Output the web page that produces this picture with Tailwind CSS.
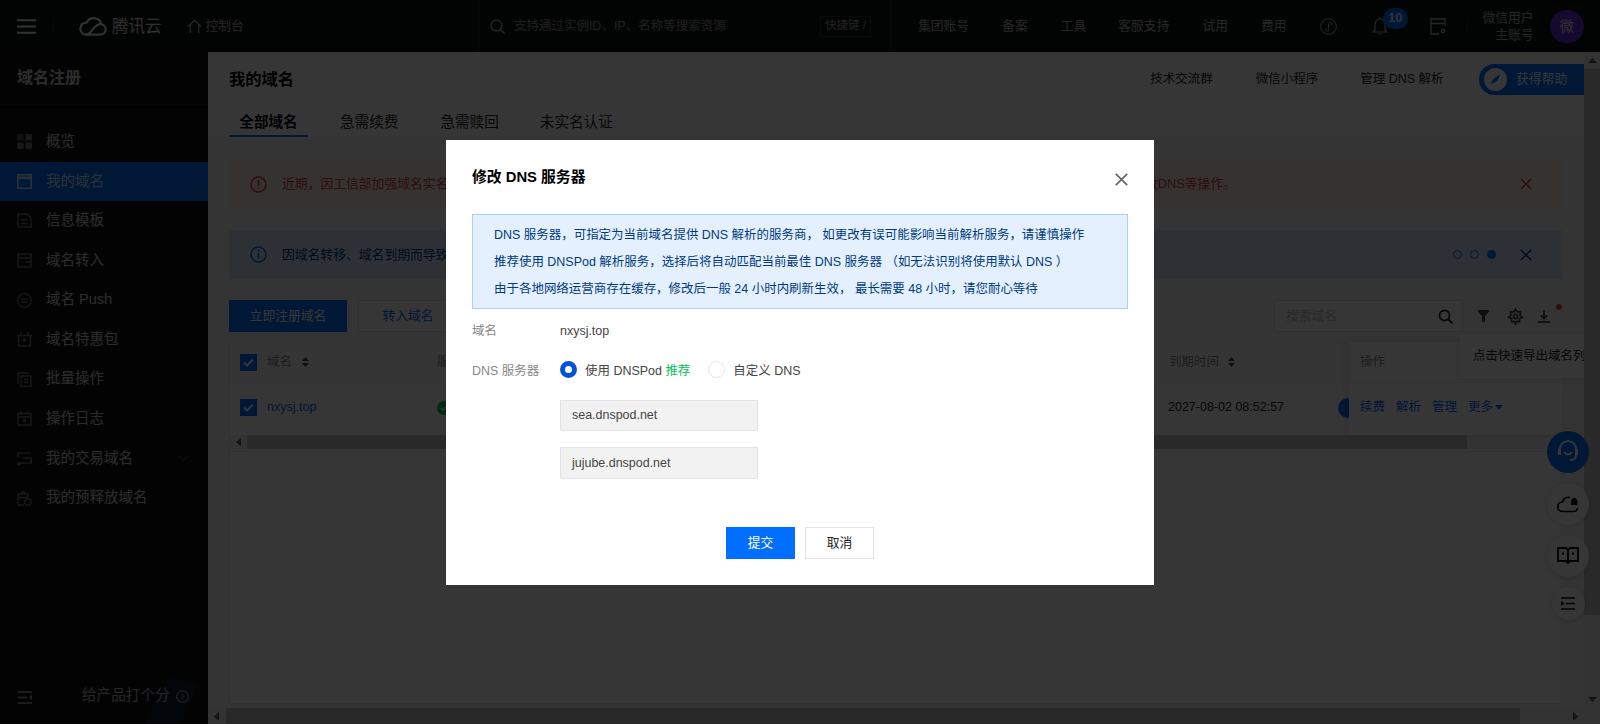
<!DOCTYPE html>
<html lang="zh">
<head>
<meta charset="utf-8">
<script src="https://cdn.jsdelivr.net/npm/@tailwindcss/browser@4"></script>
</head>
<body class="m-0 overflow-hidden bg-white">
<div class="relative w-[1600px] h-[724px] overflow-hidden font-['Liberation_Sans','Noto_Sans_CJK_SC',sans-serif] text-[12.5px] text-[#222]">

  <!-- top bar -->
  <header class="flex items-center h-[52px] bg-[#0d0e11] text-white/70 text-[12.8px]">
    <div class="flex items-center h-full w-[53px] pl-[17px] text-white/90">
      <svg width="20" height="15" viewBox="0 0 20 15"><path d="M0 1.2h19M0 7.5h19M0 13.8h19" stroke="currentColor" stroke-width="2"/></svg>
    </div>
    <div class="h-[16px] border-l border-white/10"></div>
    <svg width="28" height="20" viewBox="0 0 28 20" fill="none" stroke="currentColor" stroke-width="2.2" class="ml-[25px] text-white/90"><path d="M7 18.600h14.500a5.200 5.200 0 0 0 1-10.300A8 8 0 0 0 7.600 6.600 6 6 0 0 0 7 18.600Z"/><path d="M7 18.600c3.500 0 5-3 7-5.500s4-4.800 7.500-5.200"/></svg>
    <span class="ml-[5px] text-[16.500px] text-white/85">腾讯云</span>
    <svg width="15" height="15" viewBox="0 0 16 16" fill="none" stroke="currentColor" stroke-width="1.300" class="ml-[25px]"><path d="M1 8 8 1.500 15 8M3.500 6.500V15M12.500 6.500V15"/></svg>
    <span class="ml-[4px]">控制台</span>
    <div class="ml-[234px] h-full border-l border-white/10"></div>
    <svg width="15" height="15" viewBox="0 0 15 15" fill="none" stroke="currentColor" stroke-width="1.300" class="ml-[11px]"><circle cx="6.500" cy="6.500" r="5.500"/><path d="m10.500 10.500 4 4"/></svg>
    <span class="ml-[9px] w-[306px] text-[12.500px] text-white/55">支持通过实例ID、IP、名称等搜索资源</span>
    <span class="w-[51px] h-[21px] border border-white/15 flex items-center justify-center text-[11.500px] text-white/60">快捷键 /</span>
    <div class="ml-[19px] h-full border-l border-white/10"></div>
    <span class="ml-[27px]">集团账号</span>
    <span class="ml-[33px]">备案</span>
    <span class="ml-[33px]">工具</span>
    <span class="ml-[32px]">客服支持</span>
    <span class="ml-[33px]">试用</span>
    <span class="ml-[33px]">费用</span>
    <svg width="17" height="17" viewBox="0 0 17 17" fill="none" stroke="currentColor" stroke-width="1" class="ml-[33px]"><circle cx="8.500" cy="8.500" r="7.800"/><path d="M6 10.500a1.600 1.600 0 1 0 2.500 0V6.500a1.600 1.600 0 1 1 2.500 1"/></svg>
    <div class="relative ml-[35px] w-[16px] h-[20px]">
      <svg width="16" height="20" viewBox="0 0 16 20" fill="none" stroke="currentColor" stroke-width="1.200"><path d="M8 1v2M3 14V8a5 5 0 0 1 10 0v6l2 2H1ZM6 18h4"/></svg>
      <span class="absolute left-[11px] top-[-8px] w-[25px] h-[21px] rounded-full bg-[#006eff] flex items-center justify-center text-[12.500px] font-bold text-white/90">10</span>
    </div>
    <svg width="16" height="17" viewBox="0 0 16 17" fill="none" stroke="currentColor" stroke-width="1.300" class="ml-[42px]"><path d="M15 8V1H1v15h8M1 5.500h14"/><circle cx="13" cy="13" r="1.600"/></svg>
    <div class="ml-[21px] h-[16px] border-l border-white/10"></div>
    <div class="w-[66px] text-right text-[12.800px] leading-[17px] text-white/65"><div>微信用户</div><div>主账号</div></div>
    <div class="ml-[16px] w-[34px] h-[33px] rounded-full bg-[#6a2ce0] flex items-center justify-center text-[14px] text-white/80">微</div>
  </header>

  <div class="flex h-[672px]">
    <!-- sidebar -->
    <aside class="relative w-[208px] shrink-0 bg-[#0f1014] text-white/80 text-[14.500px] overflow-hidden">
      <div class="h-[53px] pl-[17px] pt-[16px] border-b border-white/5 text-[16px] font-bold leading-[20px]">域名注册</div>
      <nav class="pt-[17px]">
        <div class="flex items-center h-[39.600px] pl-[17px]">
          <svg width="15" height="15" viewBox="0 0 15 15" fill="currentColor" class="opacity-50"><rect width="6.500" height="6.500" opacity=".7"/><rect x="8.500" width="6.500" height="6.500"/><rect y="8.500" width="6.500" height="6.500"/><rect x="8.500" y="8.500" width="6.500" height="6.500"/></svg>
          <span class="ml-[14px]">概览</span>
        </div>
        <div class="flex items-center h-[39.600px] pl-[17px] bg-[#006eff]">
          <svg width="15" height="15" viewBox="0 0 15 15" fill="none" stroke="currentColor" stroke-width="1.600"><rect x=".8" y=".8" width="13.400" height="13.400"/><path d="M.8 3.800h13.400" stroke-width="2.600"/></svg>
          <span class="ml-[14px]">我的域名</span>
        </div>
        <div class="flex items-center h-[39.600px] pl-[17px]">
          <svg width="15" height="15" viewBox="0 0 15 15" fill="none" stroke="currentColor" stroke-width="1.400" class="opacity-50"><path d="M1 1h9l4 4v9H1ZM4 7h7M4 10.500h7"/></svg>
          <span class="ml-[14px]">信息模板</span>
        </div>
        <div class="flex items-center h-[39.600px] pl-[17px]">
          <svg width="15" height="15" viewBox="0 0 15 15" fill="none" stroke="currentColor" stroke-width="1.400" class="opacity-50"><path d="M1 14V1h13v13ZM1 5h13M8 9h6"/></svg>
          <span class="ml-[14px]">域名转入</span>
        </div>
        <div class="flex items-center h-[39.600px] pl-[17px]">
          <svg width="15" height="15" viewBox="0 0 15 15" fill="none" stroke="currentColor" stroke-width="1.300" class="opacity-50"><circle cx="7.500" cy="7.500" r="6.800"/><path d="M4 6h7M4 9h7"/></svg>
          <span class="ml-[14px]">域名 Push</span>
        </div>
        <div class="flex items-center h-[39.600px] pl-[17px]">
          <svg width="15" height="15" viewBox="0 0 15 15" fill="none" stroke="currentColor" stroke-width="1.500" class="opacity-50"><path d="M0 3.500h15M1.500 3.500V14h12V3.500M4 3V0M11 3V0"/><circle cx="7.500" cy="8" r="1" fill="currentColor"/></svg>
          <span class="ml-[14px]">域名特惠包</span>
        </div>
        <div class="flex items-center h-[39.600px] pl-[17px]">
          <svg width="15" height="15" viewBox="0 0 15 15" fill="none" stroke="currentColor" stroke-width="1.400" class="opacity-50"><path d="M1 12V1h11M4 4h10v10.300H4ZM6.500 7.500h5M6.500 10.500h5"/></svg>
          <span class="ml-[14px]">批量操作</span>
        </div>
        <div class="flex items-center h-[39.600px] pl-[17px]">
          <svg width="15" height="15" viewBox="0 0 15 15" fill="none" stroke="currentColor" stroke-width="1.500" class="opacity-50"><path d="M1 2.500h13V14H1ZM1 6h13M4 2.500V0M11 2.500V0"/><circle cx="7.500" cy="9.500" r="1" fill="currentColor"/></svg>
          <span class="ml-[14px]">操作日志</span>
        </div>
        <div class="flex items-center h-[39.600px] pl-[17px]">
          <svg width="15" height="15" viewBox="0 0 15 15" fill="none" stroke="currentColor" stroke-width="1.700" class="opacity-50"><path d="M1 6V2h13M5.500 7h8.500v5H3"/><circle cx="2" cy="13" r="1" fill="currentColor"/></svg>
          <span class="ml-[14px]">我的交易域名</span>
          <svg width="9" height="6" viewBox="0 0 9 6" fill="none" stroke="currentColor" class="ml-[46px] opacity-30"><path d="m.5.500 4 4 4-4"/></svg>
        </div>
        <div class="flex items-center h-[39.600px] pl-[17px]">
          <svg width="15" height="15" viewBox="0 0 15 15" fill="none" stroke="currentColor" stroke-width="1.400" class="opacity-50"><path d="M7 14H1V3h10v3M4 3c0-3 4-3 4 0M1 6.500h10"/><circle cx="11" cy="11" r="3.300"/></svg>
          <span class="ml-[14px]">我的预释放域名</span>
        </div>
      </nav>
      <svg width="60" height="46" viewBox="0 0 60 46" class="absolute left-[140px] bottom-0 text-[#006eff] opacity-15"><path d="M28 0l30 6-18 40H5Z" fill="currentColor"/></svg>
      <svg width="15" height="13" viewBox="0 0 15 13" fill="none" stroke="currentColor" stroke-width="1.300" class="absolute left-[18px] bottom-[20px] opacity-80"><path d="M0 1h14M0 6.500h9M0 12h14"/><path d="M14 4v5l-3-2.500Z" fill="currentColor" stroke="none"/></svg>
      <div class="absolute left-[82px] bottom-[17px] flex items-center text-white/70 text-[14.600px]">
        <span>给产品打个分</span>
        <svg width="13" height="13" viewBox="0 0 13 13" fill="none" stroke="currentColor" class="ml-[6px]"><circle cx="6.500" cy="6.500" r="5.800"/><path d="m5.500 4 2.500 2.500L5.500 9"/></svg>
      </div>
    </aside>

    <!-- main -->
    <main class="relative flex-1 flex flex-col min-w-0 bg-[#f3f4f7]">
      <div class="flex flex-1 min-h-0">
        <div class="relative flex-1 flex flex-col min-w-0 overflow-hidden">
          <!-- page header -->
          <div class="h-[85px] shrink-0 bg-white px-[21px]">
            <div class="flex items-center h-[54px]">
              <span class="text-[16.300px] font-bold text-[#000] leading-[54px]">我的域名</span>
              <span class="ml-[856px] text-[12.500px]">技术交流群</span>
              <span class="ml-[43px] text-[12.500px]">微信小程序</span>
              <span class="ml-[42px] text-[12.500px]">管理 DNS 解析</span>
              <div class="ml-auto mr-[-21px] w-[105px] h-[31px] rounded-l-[16px] bg-[#006eff] flex items-center text-white text-[12.800px]">
                <div class="ml-[5px] w-[23px] h-[23px] rounded-full bg-white flex items-center justify-center">
                  <svg width="11" height="11" viewBox="0 0 11 11"><path d="M10.500.5 7 7 .5 10.500 4 4Z" fill="#006eff"/></svg>
                </div>
                <span class="ml-[9px]">获得帮助</span>
              </div>
            </div>
            <div class="flex h-[31px] text-[14.600px] text-[#222]">
              <div class="w-[79px] h-full border-b-[2px] border-[#006eff] text-center leading-[32px] font-bold text-black">全部域名</div>
              <div class="ml-[32px] leading-[32px]">急需续费</div>
              <div class="ml-[42px] leading-[32px]">急需赎回</div>
              <div class="ml-[41px] leading-[32px]">未实名认证</div>
            </div>
          </div>

          <div class="flex-1 min-h-0 pl-[21px] pr-[22px] pt-[22px] flex flex-col">
            <!-- alerts -->
            <div class="flex items-center h-[50px] shrink-0 bg-[#fbece4] pl-[21px] text-[#d83a3a] text-[12.800px]">
              <svg width="17" height="17" viewBox="0 0 17 17" fill="none" stroke="currentColor" stroke-width="1.500"><circle cx="8.500" cy="8.500" r="7.500"/><path d="M8.500 4v6M8.500 11.500v1.500"/></svg>
              <span class="ml-[15px] w-[164px] whitespace-nowrap shrink-0">近期，因工信部加强域名实名</span>
              <span class="ml-[699px] w-[85px] text-right whitespace-nowrap shrink-0">改DNS等操作。</span>
              <svg width="12" height="12" viewBox="0 0 12 12" fill="none" stroke="currentColor" stroke-width="1.500" class="ml-auto mr-[30px]"><path d="m1 1 10 10M11 1 1 11"/></svg>
            </div>
            <div class="flex items-center h-[49px] mt-[21px] shrink-0 bg-[#d5e7ff] pl-[21px] text-[#003b80] text-[12.800px]">
              <svg width="17" height="17" viewBox="0 0 17 17" fill="none" stroke="#006eff" stroke-width="1.500"><circle cx="8.500" cy="8.500" r="7.500"/><path d="M8.500 4v1.500M8.500 7v6"/></svg>
              <span class="ml-[15px] whitespace-nowrap w-[164px]">因域名转移、域名到期而导致</span>
              <div class="ml-auto flex items-center mr-[30px]">
                <span class="w-[9px] h-[9px] rounded-full border border-[#006eff]"></span>
                <span class="ml-[8px] w-[9px] h-[9px] rounded-full border border-[#006eff]"></span>
                <span class="ml-[8px] w-[9px] h-[9px] rounded-full bg-[#006eff]"></span>
                <svg width="12" height="12" viewBox="0 0 12 12" fill="none" stroke="#003b80" stroke-width="1.500" class="ml-[24px]"><path d="m1 1 10 10M11 1 1 11"/></svg>
              </div>
            </div>
            <!-- toolbar -->
            <div class="flex items-center h-[32px] mt-[21px] shrink-0 text-[12.800px]">
              <div class="w-[118px] h-full bg-[#006eff] text-white flex items-center justify-center">立即注册域名</div>
              <div class="ml-[11px] w-[100px] h-full bg-white border border-[#ddd] text-[#006eff] flex items-center justify-center">转入域名</div>
              <div class="ml-auto w-[189px] h-full bg-white border border-[#ddd] flex items-center pl-[11px] pr-[9px] text-[#bbb]">
                <span>搜索域名</span>
                <svg width="15" height="15" viewBox="0 0 15 15" fill="none" stroke="#222" stroke-width="1.800" class="ml-auto"><circle cx="6.500" cy="6.500" r="5"/><path d="m10 10 4.500 4.500"/></svg>
              </div>
              <svg width="11" height="12" viewBox="0 0 11 12" fill="#444" class="ml-[15px]"><path d="M0 0h11v1.500L7 6v6H4V6L0 1.500Z"/></svg>
              <svg width="17" height="17" viewBox="0 0 15 15" fill="none" stroke="#444" stroke-width="1.500" class="ml-[18px]"><path d="M7.500 1 9 3.500h3l-.6 3L13.500 8l-2.500 1.500V12H8.500l-1 2-1-2H4V9.500L1.500 8l2-1.500-.5-3h3Z"/><circle cx="7.500" cy="7.500" r="1.800"/></svg>
              <svg width="12" height="13" viewBox="0 0 12 13" fill="none" stroke="#444" stroke-width="1.800" class="ml-[14px] mr-[12px]"><path d="M6 0v8M3 5.500l3 3 3-3"/><path d="M0 12h12"/></svg>
            </div>

            <!-- table -->
            <div class="mt-[10px] flex-1 min-h-0 bg-white border border-[#e6e6e6] flex flex-col">
              <div class="flex items-center h-[39px] pb-[1px] shrink-0 bg-[#f9f9f9] text-[#888] text-[12.500px]">
                <div class="ml-[10px] w-[17px] h-[17px] bg-[#006eff] flex items-center justify-center">
                  <svg width="11" height="9" viewBox="0 0 11 9" fill="none" stroke="#fff" stroke-width="2"><path d="m1 4.500 3 3 6-6"/></svg>
                </div>
                <span class="ml-[10px]">域名</span>
                <svg width="7" height="10" viewBox="0 0 7 10" fill="#444" class="ml-[10px]"><path d="M3.500 0 7 4H0ZM0 6h7l-3.500 4Z"/></svg>
                <span class="ml-[128px] w-[20px] whitespace-nowrap">服</span>
                <span class="ml-[712px]">到期时间</span>
                <svg width="7" height="10" viewBox="0 0 7 10" fill="#444" class="ml-[9px]"><path d="M3.500 0 7 4H0ZM0 6h7l-3.500 4Z"/></svg>
              </div>
              <div class="flex items-center h-[53px] pb-[3px] shrink-0 border-t border-[#eee] text-[12.500px]">
                <div class="ml-[10px] w-[17px] h-[17px] bg-[#006eff] flex items-center justify-center">
                  <svg width="11" height="9" viewBox="0 0 11 9" fill="none" stroke="#fff" stroke-width="2"><path d="m1 4.500 3 3 6-6"/></svg>
                </div>
                <span class="ml-[10px] w-[170px] text-[#006eff]">nxysj.top</span>
                <div class="w-[14px] h-[14px] rounded-full bg-[#0abf5b] flex items-center justify-center">
                  <svg width="8" height="6" viewBox="0 0 8 6" fill="none" stroke="#fff" stroke-width="1.500"><path d="m1 3 2 2 4-4"/></svg>
                </div>
                <span class="ml-[717px] w-[170px] text-[#222]">2027-08-02 08:52:57</span>
                <div class="w-[20px] h-[20px] rounded-full bg-[#006eff]"></div>
              </div>
              <div class="flex items-center h-[14px] shrink-0 bg-[#f1f1f1]">
                <svg width="5" height="8" viewBox="0 0 5 8" fill="#555" class="ml-[6px]"><path d="M5 0v8L0 4Z"/></svg>
                <div class="ml-[6px] w-[1220px] h-full bg-[#c1c1c1]"></div>
              </div>
              <div class="h-[3px] shrink-0 border-b border-[#e6e6e6]"></div>
            </div>
            <div class="h-[4px] shrink-0"></div>
          </div>

          <!-- fixed actions column -->
          <div class="absolute left-[1141px] top-[290px] w-[213px] h-[93px] bg-white shadow-[-4px_0_8px_rgba(0,0,0,0.1)] text-[12.500px]">
            <div class="h-[40px] leading-[40px] pl-[11px] text-[#888]">操作</div>
            <div class="h-[53px] pb-[3px] border-t border-[#eee] flex items-center pl-[11px] text-[#006eff]">
              <span>续费</span><span class="ml-[11px]">解析</span><span class="ml-[11px]">管理</span><span class="ml-[11px]">更多</span>
              <svg width="8" height="5" viewBox="0 0 8 5" fill="#006eff" class="ml-[2px]"><path d="M0 0h8L4 5Z"/></svg>
            </div>
          </div>
          <!-- tooltip -->
          <div class="absolute left-[1252px] top-[283px] w-[124px] h-[43px] bg-white shadow-[0_2px_8px_rgba(0,0,0,0.1)] flex items-center pl-[13px] overflow-hidden whitespace-nowrap text-[12.500px]">点击快速导出域名列</div>
          <span class="absolute left-[1348px] top-[252px] w-[6px] h-[6px] rounded-full bg-[#e54545]"></span>
        </div>

        <!-- vertical scrollbar -->
        <div class="w-[16px] shrink-0 bg-[#f1f1f1] flex flex-col">
          <div class="h-[17px] flex items-center justify-center"><svg width="9" height="5" viewBox="0 0 9 5" fill="#555"><path d="M4.500 0 9 5H0Z"/></svg></div>
          <div class="h-[546px] bg-[#c1c1c1]"></div>
          <div class="flex-1"></div>
          <div class="h-[17px] flex items-center justify-center"><svg width="9" height="5" viewBox="0 0 9 5" fill="#555"><path d="M0 0h9L4.500 5Z"/></svg></div>
        </div>
      </div>
      <!-- horizontal scrollbar -->
      <div class="h-[16px] shrink-0 bg-[#f1f1f1] flex items-center">
        <svg width="5" height="9" viewBox="0 0 5 9" fill="#555" class="ml-[6px]"><path d="M5 0v9L0 4.500Z"/></svg>
        <div class="ml-[7px] w-[1294px] h-full bg-[#c1c1c1]"></div>
        <svg width="5" height="9" viewBox="0 0 5 9" fill="#555" class="ml-[53px]"><path d="M0 0v9l5-4.500Z"/></svg>
      </div>
    </main>
  </div>

  <!-- floating buttons -->
  <div class="absolute left-[1547px] top-[431px] w-[42px] flex flex-col items-center">
    <div class="w-[42px] h-[42px] rounded-full bg-[#006eff] flex items-center justify-center">
      <svg width="22" height="24" viewBox="0 0 22 24" fill="none" stroke="#fff" stroke-width="1.800"><path d="M3 11V9a8 8 0 0 1 16 0v2M7 12c1.500 3 6.500 3 8 0M19 15c0 3-2 5-6 5"/><rect x="1" y="9" width="3" height="6" fill="#fff" stroke="none"/><rect x="18" y="9" width="3" height="6" fill="#fff" stroke="none"/></svg>
    </div>
    <div class="mt-[10px] w-[42px] h-[42px] rounded-full bg-white shadow-[0_1px_6px_rgba(0,0,0,0.15)] flex items-center justify-center">
      <svg width="22" height="18" viewBox="0 0 22 18" fill="none" stroke="#000" stroke-width="1.700"><path d="M13 2.500A6 6 0 0 0 5.500 7a4.500 4.500 0 0 0 0 9.500h11a4 4 0 0 0 4-3.500"/><path d="M14 8c0-7 6.500-7 6.500 0v2H14Z" fill="#000" stroke="none"/></svg>
    </div>
    <div class="mt-[10px] w-[42px] h-[42px] rounded-full bg-white shadow-[0_1px_6px_rgba(0,0,0,0.15)] flex items-center justify-center">
      <svg width="22" height="18" viewBox="0 0 22 18" fill="none" stroke="#000" stroke-width="1.800"><path d="M11 3 9 1H1v13h8l2 2 2-2h8V1h-8ZM11 3v13"/><path d="M5 6.500h2M15 6.500h2" stroke-width="2.200"/></svg>
    </div>
    <div class="mt-[10px] w-[33px] h-[33px] rounded-full bg-white shadow-[0_1px_6px_rgba(0,0,0,0.15)] flex items-center justify-center">
      <svg width="14" height="13" viewBox="0 0 14 13" fill="none" stroke="#000" stroke-width="1.300"><path d="M0 1h14M5 6.500h9M0 12h14"/><path d="M0 4v5l3.500-2.500Z" fill="#000" stroke="none"/></svg>
    </div>
  </div>

  <!-- dialog mask -->
  <div class="absolute inset-0 bg-black/[.79] flex items-start justify-center">
    <div class="relative mt-[140px] w-[708px] h-[445px] bg-white text-[#444] text-[12.470px] px-[26px]">
      <div class="flex items-center h-[74px]">
        <h2 class="text-[14.800px] font-bold text-black leading-[74px]">修改 DNS 服务器</h2>
        <svg width="13" height="13" viewBox="0 0 13 13" fill="none" stroke="#666" stroke-width="1.700" class="ml-auto mt-[4px]"><path d="m.8.800 11.400 11.400M12.200.800.800 12.200"/></svg>
      </div>
      <div class="h-[95px] bg-[#e5f0ff] border border-[#a6d1ff] pl-[21px] pt-[7px] text-[#003b80] leading-[27px] whitespace-nowrap">
        <div>DNS 服务器，可指定为当前域名提供 DNS 解析的服务商， 如更改有误可能影响当前解析服务，请谨慎操作</div>
        <div>推荐使用 DNSPod 解析服务，选择后将自动匹配当前最佳 DNS 服务器 （如无法识别将使用默认 DNS ）</div>
        <div>由于各地网络运营商存在缓存，修改后一般 24 小时内刷新生效， 最长需要 48 小时，请您耐心等待</div>
      </div>
      <div class="flex items-center mt-[13px] h-[18px]">
        <span class="w-[88px] text-[#888]">域名</span>
        <span>nxysj.top</span>
      </div>
      <div class="flex items-center mt-[22px] h-[18px]">
        <span class="w-[88px] text-[#888]">DNS 服务器</span>
        <span class="w-[17px] h-[17px] rounded-full border-[5px] border-[#0052d9] bg-white -mt-[4px]"></span>
        <span class="ml-[8px]">使用 DNSPod <span class="text-[#0abf5b]">推荐</span></span>
        <span class="ml-[18px] w-[17px] h-[17px] rounded-full border border-[#e7e7e7] bg-white -mt-[4px]"></span>
        <span class="ml-[8px]">自定义 DNS</span>
      </div>
      <div class="ml-[88px] mt-[20px] w-[198px] h-[31px] bg-[#f2f2f2] border border-[#e3e3e3] flex items-center pl-[11px]">sea.dnspod.net</div>
      <div class="ml-[88px] mt-[16px] w-[198px] h-[32px] bg-[#f2f2f2] border border-[#e3e3e3] flex items-center pl-[11px]">jujube.dnspod.net</div>
      <div class="flex justify-center mt-[48px] text-[12.800px]">
        <div class="w-[69px] h-[32px] bg-[#006eff] text-white flex items-center justify-center">提交</div>
        <div class="ml-[10px] w-[69px] h-[32px] bg-white border border-[#e3e3e3] text-[#222] flex items-center justify-center">取消</div>
      </div>
    </div>
  </div>
</div>
</body>
</html>
